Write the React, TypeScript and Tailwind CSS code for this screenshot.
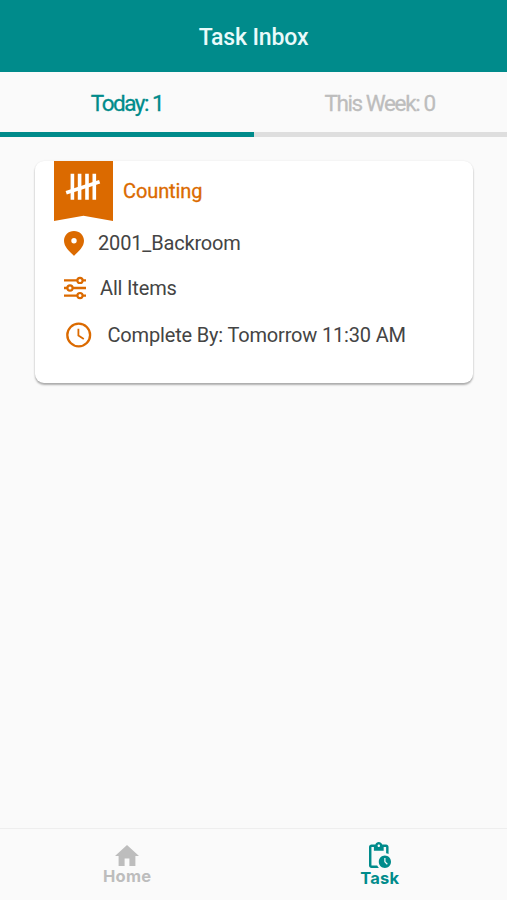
import React from "react";

function CountingBadge() {
  return (
    <svg width="59" height="60" viewBox="0 0 59 60" className="block shrink-0">
      <path d="M0 0H59V60L29.5 54.8L0 60Z" fill="#db6a00" />
      <g stroke="#fff" strokeWidth="3.6" fill="none">
        <path d="M18.4 12.8V38.8M25.6 12.8V38.8M33 12.8V38.8M40.3 12.8V38.8" />
        <path d="M12.2 31.8L45.6 20.8" />
      </g>
    </svg>
  );
}

function PinIcon() {
  return (
    <svg width="20" height="25" viewBox="0 0 20 25" className="mt-px block shrink-0">
      <path
        fillRule="evenodd"
        fill="#db6a00"
        d="M10 0C4.4 0 0 4.2 0 9.8C0 15.6 5 20.2 10 24.8C15 20.2 20 15.6 20 9.8C20 4.2 15.6 0 10 0ZM10 7.1A2.7 2.7 0 1 1 10 12.5A2.7 2.7 0 1 1 10 7.1Z"
      />
    </svg>
  );
}

function SlidersIcon() {
  return (
    <svg width="22" height="24" viewBox="0 0 22 24" className="block shrink-0" fill="none" stroke="#db6a00" strokeWidth="2.4">
      <path d="M0 4.4H13M19 4.4H22M0 12H3M9 12H22M0 19.6H13M19 19.6H22" />
      <circle cx="16" cy="4.4" r="2.6" strokeWidth="2.2" />
      <circle cx="6" cy="12" r="2.6" strokeWidth="2.2" />
      <circle cx="16" cy="19.6" r="2.6" strokeWidth="2.2" />
    </svg>
  );
}

function ClockIcon() {
  return (
    <svg width="26" height="26" viewBox="0 0 26 26" className="block shrink-0" fill="none" stroke="#db6a00">
      <circle cx="12.7" cy="13" r="11.4" strokeWidth="2.3" />
      <path d="M12.4 6.8V13.4L17.8 17" strokeWidth="1.8" />
    </svg>
  );
}

function HomeIcon() {
  return (
    <svg width="24" height="21" viewBox="2 3 20 17" preserveAspectRatio="none" className="block" fill="#bdbdbd">
      <path d="M10 20v-6h4v6h5v-8h3L12 3 2 12h3v8z" />
    </svg>
  );
}

function TaskIcon() {
  return (
    <svg width="22" height="26" viewBox="4 1 18 21" preserveAspectRatio="none" className="block" fill="#008b8b">
      <path d="M17 12c-2.76 0-5 2.24-5 5s2.24 5 5 5 5-2.24 5-5-2.24-5-5-5zm1.65 7.35L16.5 17.2V14h1v2.79l1.85 1.85-.7.71zM18 3h-3.18C14.4 1.84 13.3 1 12 1s-2.4.84-2.82 2H6c-1.1 0-2 .9-2 2v15c0 1.1.9 2 2 2h6.11a6.743 6.743 0 0 1-1.42-2H6V5h2v3h8V5h2v5.08c.71.1 1.38.31 2 .6V5c0-1.1-.9-2-2-2zm-6 2c-.55 0-1-.45-1-1s.45-1 1-1 1 .45 1 1-.45 1-1 1z" />
    </svg>
  );
}

export default function App() {
  return (
    <div className="flex h-[900px] w-full flex-col bg-[#fafafa] font-[Roboto,sans-serif] text-[#444]">
      <header className="flex h-[72px] shrink-0 items-center justify-center bg-[#008b8b] pt-1">
        <h1 className="text-[23px] leading-7 font-medium tracking-[-0.15px] text-[#e9fafa]">Task Inbox</h1>
      </header>

      <nav className="flex h-[65px] shrink-0">
        <button className="w-[254px] border-b-[5px] border-[#008b8b] pt-[3px] text-[22.5px] tracking-[-1.5px] text-[#008b8b] [-webkit-text-stroke:0.3px]">
          Today: 1
        </button>
        <button className="flex-1 border-b-[5px] border-[#dedede] pt-[3px] pr-[2px] text-[22.5px] tracking-[-1.4px] text-[#bdbdbd] [-webkit-text-stroke:0.3px]">
          This Week: 0
        </button>
      </nav>

      <main className="flex-1 pt-6 pr-[34px] pl-[35px]">
        <article className="h-[222px] rounded-[9px] bg-white pl-[19px] tracking-[-0.17px] shadow-[0_2px_2px_rgba(0,0,0,0.3),0_0_2px_rgba(0,0,0,0.08)]">
          <div className="flex h-[59px] items-center">
            <CountingBadge />
            <span className="ml-[10px] text-xl tracking-[-0.1px] text-[#db6a00] [-webkit-text-stroke:0.3px]">Counting</span>
          </div>
          <div className="flex h-[45px] items-center pl-[10px]">
            <PinIcon />
            <span className="ml-[14px] text-xl">2001_Backroom</span>
          </div>
          <div className="flex h-[45px] items-center pl-[10px]">
            <SlidersIcon />
            <span className="ml-[14px] text-xl">All Items</span>
          </div>
          <div className="flex h-[49px] items-center pl-[12px]">
            <ClockIcon />
            <span className="ml-[15.5px] text-xl">Complete By: Tomorrow 11:30 AM</span>
          </div>
        </article>
      </main>

      <footer className="flex h-[72px] shrink-0 border-t border-[#eeeeee] font-[Inter,sans-serif] text-[16.5px] leading-5 font-bold">
        <button className="flex flex-1 flex-col items-center pt-4 pl-px text-[#bdbdbd]">
          <HomeIcon />
          <span className="tracking-[0.3px]">Home</span>
        </button>
        <button className="flex flex-1 flex-col items-center pt-[13px] pr-px text-[#008b8b]">
          <TaskIcon />
          <span className="tracking-[0.2px]">Task</span>
        </button>
      </footer>
    </div>
  );
}
